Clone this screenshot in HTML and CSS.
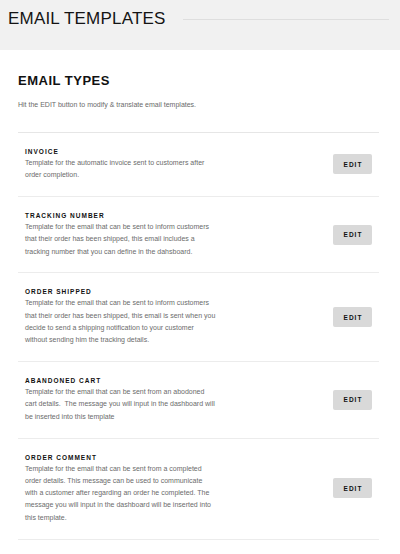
FILE: index.html
```html
<!DOCTYPE html>
<html>
<head>
<meta charset="utf-8">
<link rel="stylesheet" href="styles.css">
</head>
<body>
<header class="page-header">
  <h1 class="page-title">EMAIL TEMPLATES</h1>
  <div class="title-rule"></div>
</header>
<main class="content">
  <h2 class="section-title">EMAIL TYPES</h2>
  <p class="intro">Hit the EDIT button to modify &amp; translate email templates.</p>
  <ul class="type-list">
    <li class="type-item">
      <div class="type-text">
        <h3 class="type-name">INVOICE</h3>
        <p class="type-desc">Template for the automatic invoice sent to customers after<br>order completion.</p>
      </div>
      <button class="edit-btn">EDIT</button>
    </li>
    <li class="type-item">
      <div class="type-text">
        <h3 class="type-name">TRACKING NUMBER</h3>
        <p class="type-desc">Template for the email that can be sent to inform customers<br>that their order has been shipped, this email includes a<br>tracking number that you can define in the dahsboard.</p>
      </div>
      <button class="edit-btn">EDIT</button>
    </li>
    <li class="type-item">
      <div class="type-text">
        <h3 class="type-name">ORDER SHIPPED</h3>
        <p class="type-desc">Template for the email that can be sent to inform customers<br>that their order has been shipped, this email is sent when you<br>decide to send a shipping notification to your customer<br>without sending him the tracking details.</p>
      </div>
      <button class="edit-btn">EDIT</button>
    </li>
    <li class="type-item">
      <div class="type-text">
        <h3 class="type-name">ABANDONED CART</h3>
        <p class="type-desc">Template for the email that can be sent from an abodoned<br>cart details.&nbsp; The message you will input in the dashboard will<br>be inserted into this template</p>
      </div>
      <button class="edit-btn">EDIT</button>
    </li>
    <li class="type-item">
      <div class="type-text">
        <h3 class="type-name">ORDER COMMENT</h3>
        <p class="type-desc">Template for the email that can be sent from a completed<br>order details. This message can be used to communicate<br>with a customer after regarding an order he completed. The<br>message you will input in the dashboard will be inserted into<br>this template.</p>
      </div>
      <button class="edit-btn">EDIT</button>
    </li>
  </ul>
</main>
</body>
</html>
```

FILE: styles.css
```css
* { box-sizing: border-box; }
html, body {
  margin: 0;
  padding: 0;
  background: #ffffff;
  font-family: "Liberation Sans", Arial, sans-serif;
}
.page-header {
  height: 50px;
  background: #f1f1f1;
  display: flex;
  align-items: flex-start;
  padding: 9px 11px 0 8px;
}
.page-title {
  margin: 0;
  font-size: 17px;
  line-height: 20px;
  font-weight: 400;
  letter-spacing: 0.2px;
  color: #141414;
}
.title-rule {
  flex: 1;
  height: 1px;
  background: #dedede;
  margin: 10px 0 0 17px;
}
.content {
  padding: 0 21px 0 18px;
}
.section-title {
  margin: 23px 0 0;
  font-size: 13px;
  line-height: 16px;
  font-weight: 700;
  letter-spacing: 0.5px;
  color: #111;
}
.intro {
  margin: 11px 0 0;
  font-size: 7px;
  line-height: 10px;
  color: #6a6a6a;
}
.type-list {
  list-style: none;
  margin: 22px 0 0;
  padding: 0;
  border-top: 1px solid #e6e6e6;
}
.type-item {
  display: flex;
  align-items: center;
  justify-content: space-between;
  padding: 14px 7px 14.5px;
  border-bottom: 1px solid #ececec;
}
.type-name {
  margin: 0;
  font-size: 6.5px;
  line-height: 10px;
  font-weight: 700;
  letter-spacing: 1px;
  color: #111;
}
.type-desc {
  margin: 0;
  white-space: nowrap;
  font-size: 7px;
  line-height: 12.3px;
  color: #6b6b6b;
}
.edit-btn {
  width: 39px;
  height: 20px;
  border: none;
  border-radius: 2px;
  background: #d9d9d9;
  padding: 0 0 0 1px;
  font-family: "Liberation Sans", Arial, sans-serif;
  font-size: 6.5px;
  font-weight: 700;
  letter-spacing: 1px;
  color: #111;
}
```
